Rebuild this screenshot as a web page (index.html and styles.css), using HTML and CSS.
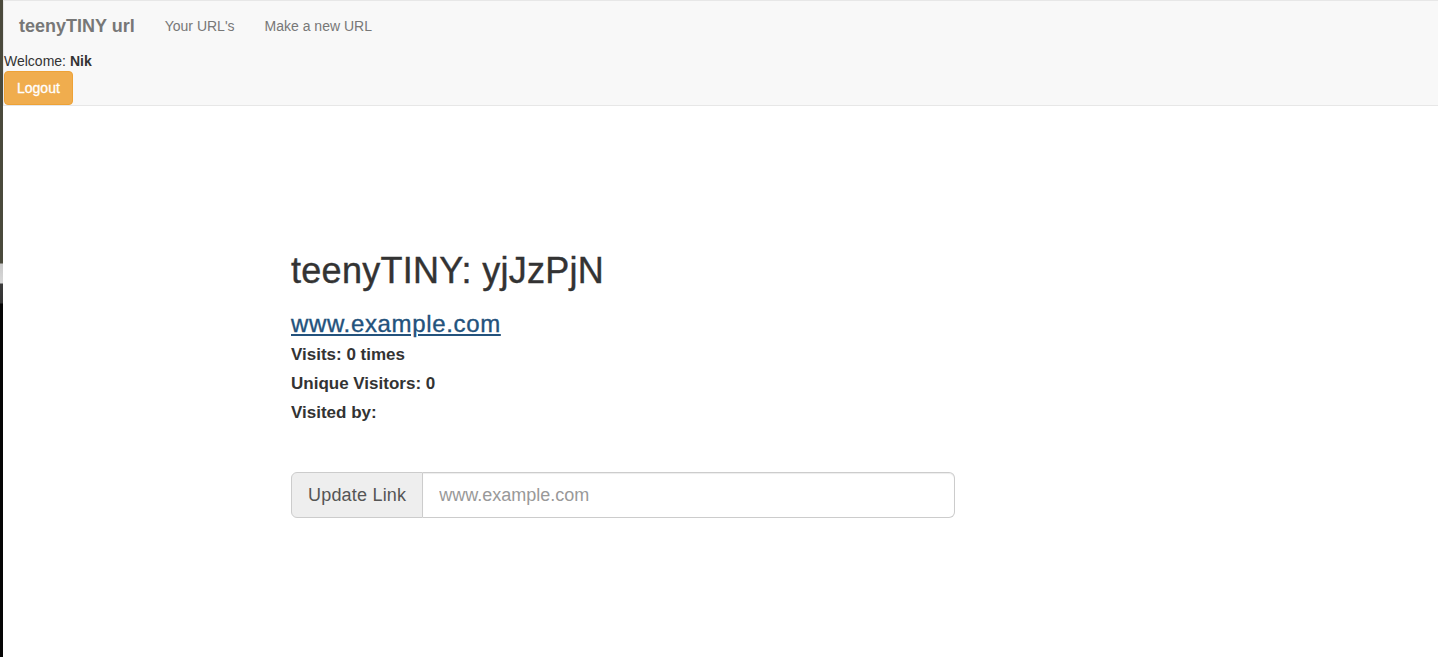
FILE: index.html
```html
<!DOCTYPE html>
<html lang="en">
<head>
<meta charset="utf-8">
<title>teenyTINY url</title>
<link rel="stylesheet" href="styles.css">
</head>
<body>
<div class="page">
  <div class="edge"></div>
  <div class="main">
    <nav class="navbar">
      <div class="nav-row">
        <a class="brand" href="#">teenyTINY url</a>
        <a class="nav-link" href="#">Your URL's</a>
        <a class="nav-link" href="#">Make a new URL</a>
      </div>
      <div class="welcome">Welcome: <b>Nik</b></div>
      <button class="btn-logout" type="button">Logout</button>
    </nav>
    <section class="content">
      <h1 class="title">teenyTINY: yjJzPjN</h1>
      <a class="long-url" href="#">www.example.com</a>
      <div class="stat">Visits: 0 times</div>
      <div class="stat">Unique Visitors: 0</div>
      <div class="stat">Visited by:</div>
      <form class="input-group">
        <button class="addon" type="button">Update Link</button>
        <input class="field" type="text" placeholder="www.example.com">
      </form>
    </section>
  </div>
</div>
</body>
</html>
```
FILE: styles.css
```css
* { box-sizing: border-box; }
html, body { margin: 0; padding: 0; height: 100%; }
body {
  font-family: "Liberation Sans", Arial, Helvetica, sans-serif;
  font-size: 14px;
  line-height: 20px;
  color: #333;
  background: #fff;
}
.page {
  display: flex;
  min-height: 657px;
}
.edge {
  width: 3px;
  flex: 0 0 3px;
  background: linear-gradient(to bottom,
    #4b4a3c 0px, #4a4a3c 263px,
    #c9c9c9 264px, #d8d8d8 283px,
    #3c3c3c 284px, #333 303px,
    #050505 304px, #050505 100%);
}
.main {
  flex: 1;
  min-width: 0;
}
.navbar {
  background: #f8f8f8;
  border: 1px solid #e7e7e7;
  border-right: none;
  height: 106px;
}
.nav-row {
  display: flex;
  height: 50px;
  align-items: stretch;
}
.brand {
  font-size: 18px;
  line-height: 20px;
  font-weight: bold;
  color: #777;
  text-decoration: none;
  padding: 15px 15px;
}
.nav-link {
  font-size: 14px;
  line-height: 20px;
  color: #777;
  text-decoration: none;
  padding: 15px 15px;
}
.welcome {
  font-size: 14px;
  line-height: 20px;
  color: #333;
}
.btn-logout {
  display: block;
  height: 34px;
  padding: 6px 12px;
  font-family: inherit;
  font-size: 14px;
  line-height: 20px;
  color: #fff;
  background: #f0ad4e;
  border: 1px solid #eea236;
  border-radius: 4px;
  -webkit-text-stroke: 0.3px #fff;
}
.content {
  padding: 145px 0 0 288px;
  width: 952px;
}
.title {
  margin: 0;
  font-size: 36px;
  line-height: 40px;
  font-weight: normal;
  letter-spacing: 0.28px;
  -webkit-text-stroke: 0.4px #333;
  color: #333;
}
.long-url {
  display: block;
  margin-top: 19px;
  font-size: 24px;
  line-height: 28px;
  letter-spacing: 0.65px;
  -webkit-text-stroke: 0.35px #23527c;
  color: #23527c;
  text-decoration: underline;
  width: max-content;
}
.long-url + .stat { margin-top: 2px; }
.stat {
  font-size: 17px;
  line-height: 29px;
  font-weight: bold;
  color: #333;
}
.input-group {
  display: flex;
  margin-top: 45px;
  height: 46px;
  width: 664px;
}
.addon {
  flex: 0 0 auto;
  padding: 10px 16px;
  font-family: inherit;
  font-size: 18px;
  line-height: 24px;
  letter-spacing: 0.2px;
  color: #555;
  background: #eee;
  border: 1px solid #ccc;
  border-radius: 6px 0 0 6px;
}
.field {
  flex: 1;
  min-width: 0;
  padding: 10px 16px;
  font-family: inherit;
  font-size: 18px;
  line-height: 24px;
  color: #555;
  background: #fff;
  border: 1px solid #ccc;
  border-left: none;
  border-radius: 0 6px 6px 0;
  box-shadow: inset 0 1px 1px rgba(0,0,0,.075);
}
.field::placeholder { color: #999; }
```
